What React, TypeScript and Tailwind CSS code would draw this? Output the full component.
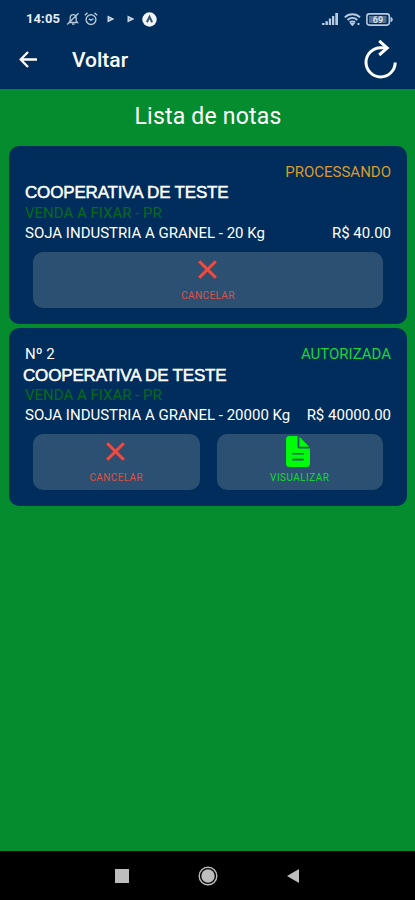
import clsx from 'clsx';

interface Nota {
  id: number;
  numero: string | null;
  status: 'PROCESSANDO' | 'AUTORIZADA';
  cooperativa: string;
  operacao: string;
  produto: string;
  valor: string;
}

const NOTAS: Nota[] = [
  {
    id: 1,
    numero: null,
    status: 'PROCESSANDO',
    cooperativa: 'COOPERATIVA DE TESTE',
    operacao: 'VENDA A FIXAR - PR',
    produto: 'SOJA INDUSTRIA A GRANEL - 20 Kg',
    valor: 'R$ 40.00',
  },
  {
    id: 2,
    numero: 'Nº 2',
    status: 'AUTORIZADA',
    cooperativa: 'COOPERATIVA DE TESTE',
    operacao: 'VENDA A FIXAR - PR',
    produto: 'SOJA INDUSTRIA A GRANEL - 20000 Kg',
    valor: 'R$ 40000.00',
  },
];

export default function App() {
  return (
    <div className="flex h-[900px] w-[415px] flex-col overflow-hidden bg-[#058c2e] font-['Roboto',sans-serif] text-white">
      <header className="h-[89px] bg-[#002d5b]">
        <StatusBar />
        <div className="flex h-[51px] items-center pl-[19px] pr-[17px]">
          <BackIcon />
          <h1 className="ml-[34px] mt-[-7px] text-[21px] font-medium leading-6">Voltar</h1>
          <RefreshIcon />
        </div>
      </header>

      <main className="flex flex-1 flex-col px-[9px] pr-2">
        <h2 className="pt-3 text-center text-[23px] leading-8 tracking-[0.2px]">Lista de notas</h2>
        <div className="mt-[13px] flex flex-col gap-1">
          {NOTAS.map((nota) => (
            <NotaCard key={nota.id} nota={nota} />
          ))}
        </div>
      </main>

      <NavBar />
    </div>
  );
}

function NotaCard({ nota }: { nota: Nota }) {
  const autorizada = nota.status === 'AUTORIZADA';
  return (
    <div className="flex h-[178px] flex-col rounded-[10px] bg-[#002d5b] px-4 pt-4 text-[15px] leading-5">
      <div className="flex h-5 justify-between">
        <span>{nota.numero}</span>
        <span className={autorizada ? 'text-[#1fd33c]' : 'text-[#d99a2b]'}>{nota.status}</span>
      </div>
      <div
        className={clsx(
          "h-[21px] whitespace-nowrap font-['Liberation_Sans',sans-serif] text-[17px] tracking-[-0.17px] [-webkit-text-stroke:0.5px_white]",
          autorizada ? '-ml-0.5 leading-6' : 'leading-[22px]'
        )}
      >
        {nota.cooperativa}
      </div>
      <div className="h-5 text-[#056b1c]">{nota.operacao}</div>
      <div className="flex h-5 justify-between whitespace-nowrap">
        <span>{nota.produto}</span>
        <span>{nota.valor}</span>
      </div>
      {/* Actions */}
      <div className="mt-[9px] flex gap-[17px] px-2">
        <button className="flex h-14 flex-1 flex-col items-center rounded-[10px] bg-[#2c5071] text-[#dc5147]">
          <CloseIcon />
          <span className="text-[10px] leading-3 tracking-[0.4px]">CANCELAR</span>
        </button>
        {autorizada && (
          <button className="flex h-14 flex-1 flex-col items-center rounded-[10px] bg-[#2c5071] text-[#12dc2e]">
            <FileIcon />
            <span className="text-[10px] leading-3 tracking-[0.45px]">VISUALIZAR</span>
          </button>
        )}
      </div>
    </div>
  );
}

function StatusBar() {
  return (
    <div className="flex h-[38px] items-center pl-[26px] pr-[22px]">
      <span className="w-[40px] text-[13px] font-bold leading-4 tracking-[0.1px] text-[#e5ecf3]">14:05</span>
      {/* muted bell */}
      <svg className="h-[14px] w-[14px]" viewBox="0 0 14 14" fill="none" stroke="#b4c6d8" strokeWidth="1.3">
        <path d="M3 10.5h8.5L10.2 9V6c0-2-1.2-3.3-3-3.3S4.2 4 4.2 6v3zM6 12.2h2.5M1.2 12.5 12.5 1.2" />
      </svg>
      {/* alarm */}
      <svg className="ml-[4px] h-[14px] w-[14px]" viewBox="0 0 14 14" fill="none" stroke="#b4c6d8" strokeWidth="1.4">
        <circle cx="7" cy="7.6" r="4.9" />
        <path d="M.8 3.2 3.5.9M13.2 3.2 10.5.9M4.8 6.8 7 8.2l2.4-1.4" />
      </svg>
      <PlayMark className="ml-[9px] h-2 w-2" />
      <PlayMark className="ml-[12px] h-2 w-2" />
      <svg className="ml-[7px] h-[15px] w-[15px]" viewBox="0 0 15 15">
        <circle cx="7.5" cy="7.5" r="7.2" fill="#f3f6f9" />
        <path d="M4.9 10.3 7.5 4.9l2.6 5.4" fill="none" stroke="#385676" strokeWidth="2" />
      </svg>

      <svg className="ml-auto h-3 w-4" viewBox="0 0 16 12" fill="#b9c9df">
        <path d="M0 10h2.5v2H0zM3.4 8.2h2.5V12H3.4zM6.8 5.5h2.3V12H6.8zM10 3h2.3v9H10zM13.3 0H16v12h-2.7z" />
      </svg>
      <svg className="ml-[6px] h-[13px] w-[17px]" viewBox="0 0 17 13" fill="none" stroke="#b9c9df" strokeWidth="1.9">
        <path d="M.8 4.3C4.8.2 12 .2 16 4.3M3.5 7c2.8-2.8 7-2.8 9.8 0M5.8 9.3c1.4-1.3 3.8-1.3 5.2 0" />
        <path d="m7.2 10.4 1.2 1.5 1.2-1.5zM13.5 11h2" />
      </svg>
      <svg className="ml-[5px] h-[13px] w-[27px]" viewBox="0 0 27 13">
        <rect x=".9" y=".9" width="22.4" height="11.2" rx="2.5" fill="none" stroke="#b9c9df" strokeWidth="1.6" />
        <path d="M24.5 3.7c3 1 3 4.6 0 5.6z" fill="#b9c9df" />
        <rect x="3" y="3" width="17.5" height="7" fill="#527091" />
        <text x="12" y="9.8" textAnchor="middle" fontSize="9" fontWeight="700" fill="#d3dfeb">
          69
        </text>
      </svg>
    </div>
  );
}

function PlayMark({ className }: { className: string }) {
  return (
    <svg className={className} viewBox="0 0 8 8">
      <path d="M.5.5 7.5 4l-7 3.5z" fill="#c7d5e2" />
      <path d="M2 3.2 3.8 4 2 4.8z" fill="#4b6a8c" />
    </svg>
  );
}

function BackIcon() {
  return (
    <svg className="-mt-[9px] h-[17px] w-[19px]" viewBox="0 0 19 17" fill="none" stroke="#fff" strokeWidth="2.3">
      <path d="M18 8.5H2M9 1 1.7 8.5 9 16" />
    </svg>
  );
}

function RefreshIcon() {
  return (
    <svg
      className="-mt-[9px] ml-auto h-[40px] w-[36px]"
      viewBox="0 0 36 40"
      fill="none"
      stroke="#fff"
      strokeWidth="3"
    >
      <path d="M33.2 23.5A14.6 14.6 0 1 1 18.6 8.7H25" />
      <path d="M17.2 1.8 25.2 9l-8 7" />
    </svg>
  );
}

function CloseIcon() {
  return (
    <svg className="-ml-px mb-[11px] mt-[8px] h-[19px] w-[19px]" viewBox="0 0 19 19" stroke="#f6493e" strokeWidth="3">
      <path d="m1.2 1.2 16.6 16.6M17.8 1.2 1.2 17.8" />
    </svg>
  );
}

function FileIcon() {
  return (
    <svg className="-ml-[4px] mb-[5px] mt-[2px] h-[31px] w-[24px]" viewBox="0 0 25 31" preserveAspectRatio="none">
      <path
        d="M3.5 0H12v10.5a2 2 0 0 0 2 2h11V27.5a3.5 3.5 0 0 1-3.5 3.5h-18A3.5 3.5 0 0 1 0 27.5v-24A3.5 3.5 0 0 1 3.5 0zM14 .7 24.2 10.8H14z"
        fill="#00fc08"
      />
      <path d="M6.5 17.8h12M6.5 23.6h12" stroke="#2c5071" strokeWidth="1.6" />
    </svg>
  );
}

function NavBar() {
  return (
    <nav className="flex h-[49px] items-center bg-black pl-[115px] text-[#bdbdbd]">
      <div className="h-[14px] w-[14px] bg-current" />
      <svg className="ml-[69px] h-5 w-5" viewBox="0 0 20 20" fill="none" stroke="currentColor">
        <circle cx="10" cy="10" r="8.8" strokeWidth="1.4" />
        <circle cx="10" cy="10" r="6.7" fill="currentColor" stroke="none" />
      </svg>
      <svg className="ml-[69px] h-[14px] w-3" viewBox="0 0 12 14" fill="currentColor">
        <path d="M12 0v14L0 7z" />
      </svg>
    </nav>
  );
}
